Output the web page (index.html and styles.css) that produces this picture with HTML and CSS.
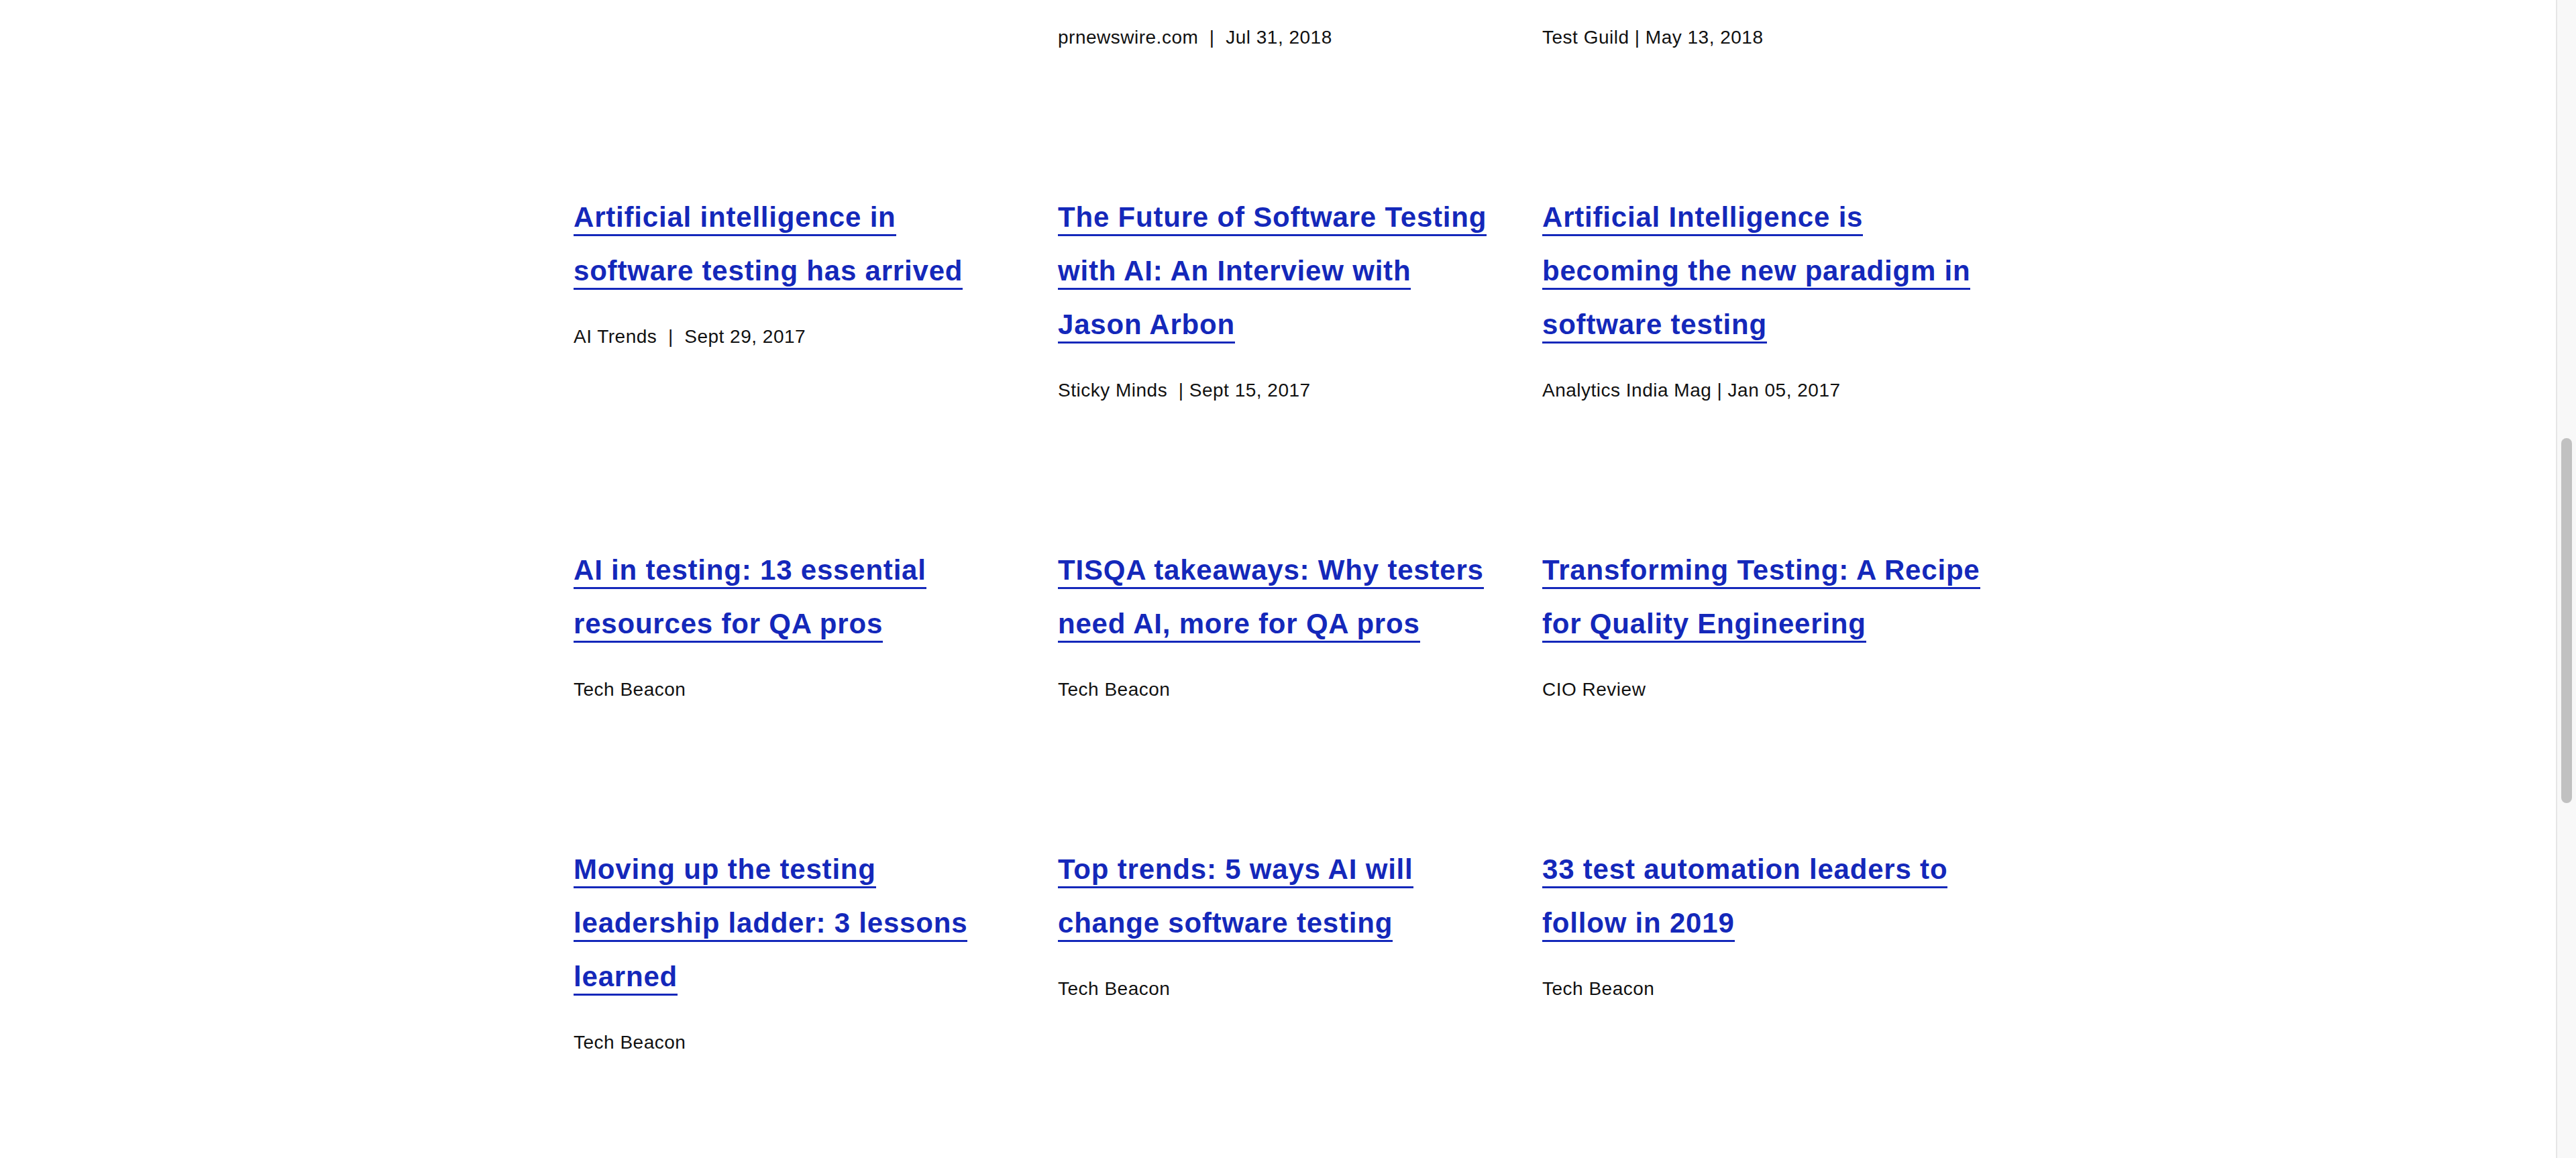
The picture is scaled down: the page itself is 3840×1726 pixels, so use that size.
FILE: index.html
```html
<!DOCTYPE html>
<html lang="en">
<head>
<meta charset="utf-8">
<title>In the news</title>
<link rel="stylesheet" href="styles.css">
</head>
<body>
<div class="page">
  <main class="content">
    <div class="grid">
      <article class="card"></article>
      <article class="card"><p class="meta">prnewswire.com&nbsp; |&nbsp; Jul 31, 2018</p></article>
      <article class="card"><p class="meta">Test Guild | May 13, 2018</p></article>

      <article class="card">
        <h3 class="title"><a class="link" href="#">Artificial intelligence in software testing has arrived</a></h3>
        <p class="meta">AI Trends&nbsp; |&nbsp; Sept 29, 2017</p>
      </article>
      <article class="card">
        <h3 class="title"><a class="link" href="#">The Future of Software Testing with AI: An Interview with Jason Arbon</a></h3>
        <p class="meta">Sticky Minds&nbsp; | Sept 15, 2017</p>
      </article>
      <article class="card">
        <h3 class="title"><a class="link" href="#">Artificial Intelligence is becoming the new paradigm in software testing</a></h3>
        <p class="meta">Analytics India Mag | Jan 05, 2017</p>
      </article>

      <article class="card">
        <h3 class="title"><a class="link" href="#">AI in testing: 13 essential resources for QA pros</a></h3>
        <p class="meta">Tech Beacon</p>
      </article>
      <article class="card">
        <h3 class="title"><a class="link" href="#">TISQA takeaways: Why testers need AI, more for QA pros</a></h3>
        <p class="meta">Tech Beacon</p>
      </article>
      <article class="card">
        <h3 class="title"><a class="link" href="#">Transforming Testing: A Recipe for Quality Engineering</a></h3>
        <p class="meta">CIO Review</p>
      </article>

      <article class="card">
        <h3 class="title"><a class="link" href="#">Moving up the testing leadership ladder: 3 lessons learned</a></h3>
        <p class="meta">Tech Beacon</p>
      </article>
      <article class="card">
        <h3 class="title"><a class="link" href="#">Top trends: 5 ways AI will change software testing</a></h3>
        <p class="meta">Tech Beacon</p>
      </article>
      <article class="card">
        <h3 class="title"><a class="link" href="#">33 test automation leaders to follow in 2019</a></h3>
        <p class="meta">Tech Beacon</p>
      </article>
    </div>
  </main>
  <div class="scrollbar"><div class="thumb"></div></div>
</div>
</body>
</html>
```

FILE: styles.css
```css
html, body {
  margin: 0;
  padding: 0;
  height: 100%;
  overflow: hidden;
  background: #ffffff;
}

.page {
  display: flex;
  height: 100%;
}

.content {
  flex: 1;
  padding: 36px 0 0 855px;
  font-family: "Liberation Sans", Arial, sans-serif;
}

.grid {
  display: grid;
  grid-template-columns: repeat(3, 722px);
  row-gap: 208px;
  align-items: start;
}

.card {
  padding-right: 64px;
}

.title {
  margin: 0;
  font-size: 42px;
  line-height: 80px;
  font-weight: 700;
  letter-spacing: 0.8px;
}

.link {
  color: #1428ba;
  text-decoration: none;
  border-bottom: 3px solid #1428ba;
  padding-bottom: 2px;
}

.meta {
  margin: 0;
  font-size: 28px;
  line-height: 40px;
  letter-spacing: 0.5px;
  color: #111111;
}

.title + .meta {
  margin-top: 38px;
}

.scrollbar {
  width: 28px;
  background: #f8f8f8;
  border-left: 2px solid #e6e6e6;
  display: flex;
  flex-direction: column;
  align-items: center;
}

.thumb {
  margin-top: 653px;
  width: 16px;
  height: 544px;
  border-radius: 8px;
  background: #c1c1c1;
}
```
